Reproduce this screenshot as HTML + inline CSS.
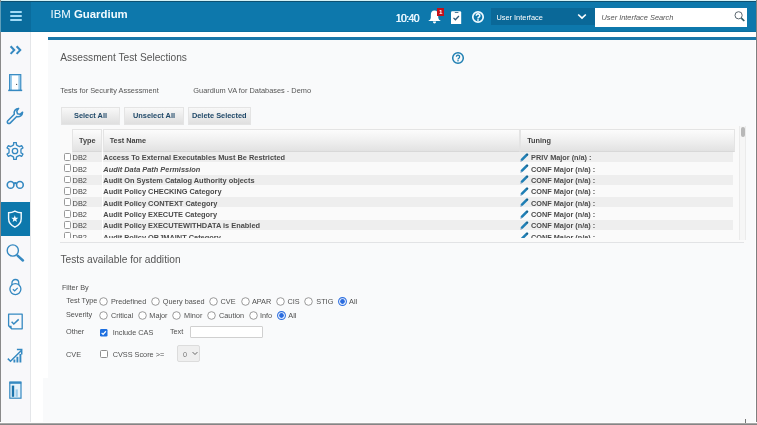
<!DOCTYPE html>
<html><head><meta charset="utf-8">
<style>
*{margin:0;padding:0;box-sizing:border-box;}
html,body{width:757px;height:425px;overflow:hidden;background:#fff;font-family:"Liberation Sans",sans-serif;}
.a{position:absolute;white-space:nowrap;}
.btn{height:17.5px;background:linear-gradient(#f8f8f8,#dfdfdf);border:1px solid #e4e4e4;}
.cb{width:7.3px;height:7.8px;border:1px solid #999;border-radius:1.5px;background:#fff;}
</style></head><body>
<div style="position:absolute;left:0;top:0;width:757px;height:425px;will-change:transform;background:#fff">
<div class="a" style="left:0px;top:0px;width:757px;height:32px;background:#0d78ac"></div>
<div class="a" style="left:0px;top:0px;width:31px;height:32px;background:#0a6c9d"></div>
<div class="a" style="left:31px;top:31px;width:726px;height:1px;background:#0b6e9f"></div>
<div class="a" style="left:10px;top:11px;width:12px;height:2px;background:#a3dbf6;border-radius:1px"></div>
<div class="a" style="left:10px;top:15px;width:12px;height:2px;background:#a3dbf6;border-radius:1px"></div>
<div class="a" style="left:10px;top:19px;width:12px;height:2px;background:#a3dbf6;border-radius:1px"></div>
<div class="a" style="left:50.5px;top:9.35px;font-size:11.4px;line-height:11.4px;color:#f2fbff">IBM <b>Guardium</b></div>
<div class="a" style="left:395.6px;top:13.01px;font-size:10.5px;line-height:10.5px;color:#eaf7ff;letter-spacing:-0.62px;text-shadow:0.35px 0 0 #eaf7ff">10:40</div>
<svg class="a" style="left:427px;top:9px" width="16" height="16" viewBox="0 0 16 16">
<path d="M7.5 1.6C4.9 1.6 3.9 3.4 3.9 5.6L3.8 9.0Q3.6 10.8 1.2 12.1H13.9Q11.5 10.8 11.3 9.0L11.1 5.6C11.1 3.4 10.1 1.6 7.5 1.6z" fill="#fff"/>
<path d="M5.9 12.6a1.6 1.9 0 0 0 3.2 0z" fill="#fff"/></svg>
<div class="a" style="left:437px;top:8px;width:6.7px;height:7.5px;background:#c3121c"></div>
<div class="a" style="left:438.9px;top:8.95px;font-size:6.2px;line-height:6.2px;color:#fff;font-weight:bold">1</div>
<svg class="a" style="left:450px;top:10px" width="13" height="15" viewBox="0 0 13 15">
<path d="M2.2 1.3H10Q11.2 1.3 11.2 2.5V14H1V2.5Q1 1.3 2.2 1.3z" fill="#fff"/>
<path d="M4.8 2.5h3.6" stroke="#3b6d8c" stroke-width="0.9"/>
<path d="M3.5 7.9l1.9 1.9 3.5-3.8" fill="none" stroke="#2b5878" stroke-width="1.3"/></svg>
<svg class="a" style="left:471px;top:10.3px" width="14" height="14" viewBox="0 0 14 14">
<circle cx="7" cy="7" r="5.2" fill="none" stroke="#eefaff" stroke-width="1.7"/>
<path d="M5.3 5.7a1.75 1.75 0 1 1 2.5 1.5c-0.6 0.3-0.8 0.6-0.8 1.3" fill="none" stroke="#eefaff" stroke-width="1.6"/>
<circle cx="7" cy="9.9" r="0.95" fill="#eefaff"/></svg>
<div class="a" style="left:491px;top:8px;width:104px;height:17px;background:#0a6898"></div>
<div class="a" style="left:496.4px;top:13.54px;font-size:7.4px;line-height:7.4px;color:#fff">User Interface</div>
<svg class="a" style="left:577px;top:13px" width="10" height="7" viewBox="0 0 10 7">
<path d="M1.2 1.5l3.8 3.6 3.8-3.6" fill="none" stroke="#fff" stroke-width="1.7"/></svg>
<div class="a" style="left:595px;top:8px;width:152px;height:18.5px;background:#fff"></div>
<div class="a" style="left:601.5px;top:13.54px;font-size:7.4px;line-height:7.4px;color:#555;font-style:italic">User Interface Search</div>
<svg class="a" style="left:733px;top:9.5px" width="14" height="14" viewBox="0 0 14 14">
<circle cx="5.6" cy="5.3" r="3.6" fill="none" stroke="#5b6770" stroke-width="1"/>
<path d="M8.3 8.1l3 2.9" stroke="#2f5a64" stroke-width="1.7"/></svg>
<div class="a" style="left:0px;top:32px;width:30px;height:393px;background:#f8f8fa"></div>
<div class="a" style="left:30px;top:32px;width:1px;height:393px;background:#e4e6e9"></div>
<div class="a" style="left:31px;top:32px;width:726px;height:393px;background:#fff"></div>
<div class="a" style="left:48px;top:40px;width:707px;height:385px;background:#f9fafb"></div>
<div class="a" style="left:43px;top:378px;width:5px;height:47px;background:#f9fafb"></div>
<div class="a" style="left:48px;top:37px;width:708px;height:3px;background:#1a77a9"></div>
<div class="a" style="left:1px;top:202px;width:29px;height:34px;background:#0d78ac"></div>
<svg class="a" style="left:9px;top:45px" width="14" height="10" viewBox="0 0 14 10">
<path d="M1.6 1.3l3.6 3.8-3.6 3.8M7.6 1.3l3.6 3.8-3.6 3.8" fill="none" stroke="#3589c1" stroke-width="2.1"/></svg>
<svg class="a" style="left:8px;top:73px" width="15" height="19" viewBox="0 0 15 19">
<rect x="1.6" y="1.6" width="11.2" height="15.8" fill="#9bcbea" stroke="#3589c1" stroke-width="1.1"/>
<rect x="4" y="2.6" width="6.3" height="14.3" fill="#fff"/>
<path d="M0.2 17.4h14" stroke="#3589c1" stroke-width="1.5"/>
<circle cx="8.6" cy="11.4" r="0.65" fill="#555"/></svg>
<svg class="a" style="left:6px;top:107px" width="19" height="19" viewBox="0 0 19 19">
<path d="M12.6 1.4a4.6 4.6 0 0 0-4.3 5.9L1.8 13.8a1.6 1.6 0 0 0 2.3 2.3l6.6-6.6a4.6 4.6 0 0 0 5.9-4.3l-2.6 2.1-2.6-0.6-0.6-2.6z" fill="none" stroke="#3589c1" stroke-width="1.55" stroke-linejoin="round"/></svg>
<svg class="a" style="left:6px;top:142px" width="18" height="18" viewBox="0 0 18 18">
<path d="M6.05 3.89 L7.58 2.86 L7.67 0.60 L10.33 0.60 L10.42 2.86 L11.95 3.89 L13.61 4.70 L15.61 3.65 L16.94 5.95 L15.02 7.16 L14.90 9.00 L15.02 10.84 L16.94 12.05 L15.61 14.35 L13.61 13.30 L11.95 14.11 L10.42 15.14 L10.33 17.40 L7.67 17.40 L7.58 15.14 L6.05 14.11 L4.39 13.30 L2.39 14.35 L1.06 12.05 L2.98 10.84 L3.10 9.00 L2.98 7.16 L1.06 5.95 L2.39 3.65 L4.39 4.70Z" fill="none" stroke="#3589c1" stroke-width="1.3" stroke-linejoin="round"/>
<circle cx="9" cy="9" r="2.7" fill="none" stroke="#3589c1" stroke-width="1.3"/></svg>
<svg class="a" style="left:6px;top:180px" width="19" height="10" viewBox="0 0 19 10">
<circle cx="4.6" cy="4.9" r="3.35" fill="none" stroke="#3589c1" stroke-width="1.6"/>
<circle cx="13.9" cy="4.9" r="3.35" fill="none" stroke="#3589c1" stroke-width="1.6"/>
<path d="M7.6 3.6Q9.25 2.6 10.9 3.6" fill="none" stroke="#3589c1" stroke-width="2.0"/></svg>
<svg class="a" style="left:7px;top:210px" width="17" height="19" viewBox="0 0 17 19">
<path d="M7.9 1.1Q10.9 2.8 14.2 2.8V8.8Q14.2 14.2 7.9 17.2Q1.6 14.2 1.6 8.8V2.8Q4.9 2.8 7.9 1.1z" fill="none" stroke="#f4fbff" stroke-width="1.4"/>
<path d="M7.80 5.30 L8.71 7.75 L11.32 7.86 L9.27 9.48 L9.97 11.99 L7.80 10.55 L5.63 11.99 L6.33 9.48 L4.28 7.86 L6.89 7.75Z" fill="#f4fbff"/></svg>
<svg class="a" style="left:6px;top:244px" width="19" height="19" viewBox="0 0 19 19">
<circle cx="6.8" cy="6.5" r="5.6" fill="none" stroke="#3589c1" stroke-width="1.4"/>
<path d="M11.6 11.6l5.3 4.9" stroke="#3589c1" stroke-width="2.5" stroke-linecap="round"/></svg>
<svg class="a" style="left:9px;top:278px" width="14" height="18" viewBox="0 0 14 18">
<path d="M2.95 7V4.9a3.4 3.4 0 0 1 6.8 0V7" fill="none" stroke="#3589c1" stroke-width="1.3"/>
<circle cx="6.4" cy="11.1" r="5.5" fill="#f8f8fa" stroke="#3589c1" stroke-width="1.3"/>
<path d="M3.9 11.2l1.8 1.7 3-3" fill="none" stroke="#3589c1" stroke-width="1.3"/></svg>
<svg class="a" style="left:7px;top:313px" width="17" height="17" viewBox="0 0 17 17">
<path d="M1.6 1.2h13.6v14.6H4.6L1.6 12.8z" fill="none" stroke="#3589c1" stroke-width="1.3" stroke-linejoin="round"/>
<path d="M1.6 12.8h3v3z" fill="#3589c1"/>
<path d="M4.6 8.8l2.2 2.2 4.9-4.6" fill="none" stroke="#3589c1" stroke-width="1.5"/></svg>
<svg class="a" style="left:7px;top:347px" width="17" height="17" viewBox="0 0 17 17">
<path d="M0.8 11.6l2.7 2.7 10.6-10.6M9.9 2.6h4.8v4.8" fill="none" stroke="#3589c1" stroke-width="1.5"/>
<path d="M7.4 15.6v-3M10.4 15.6v-5.8M13.4 15.6v-8.6" stroke="#3589c1" stroke-width="1.9"/></svg>
<svg class="a" style="left:9px;top:381px" width="13" height="18" viewBox="0 0 13 18">
<rect x="0.8" y="1.2" width="11.2" height="16" fill="#e6f2fa" stroke="#3589c1" stroke-width="1.2"/>
<rect x="0.6" y="0.6" width="11.6" height="2.2" fill="#3589c1"/>
<rect x="2.8" y="4.6" width="2.4" height="11.2" fill="#1a73ab"/>
<rect x="6.6" y="8.4" width="2.2" height="7.4" fill="#9ccbea"/></svg>
<div class="a" style="left:60.3px;top:52.87px;font-size:10.2px;line-height:10.2px;color:#555">Assessment Test Selections</div>
<svg class="a" style="left:451.2px;top:50.5px" width="14" height="14" viewBox="0 0 14 14">
<circle cx="7" cy="7" r="5.3" fill="none" stroke="#1f7fb2" stroke-width="1.5"/>
<path d="M5.4 5.8a1.6 1.6 0 1 1 2.4 1.4c-0.5 0.3-0.8 0.6-0.8 1.2" fill="none" stroke="#1f7fb2" stroke-width="1.3"/>
<circle cx="7" cy="9.8" r="0.8" fill="#1f7fb2"/></svg>
<div class="a" style="left:60.2px;top:87.14px;font-size:7.4px;line-height:7.4px;color:#555">Tests for Security Assessment</div>
<div class="a" style="left:193.3px;top:87.14px;font-size:7.4px;line-height:7.4px;color:#555">Guardium VA for Databases - Demo</div>
<div class="a btn" style="left:61px;top:107px;width:59px"></div>
<div class="a" style="left:61px;top:112.14px;width:59px;text-align:center;font-size:7.4px;line-height:7.4px;font-weight:bold;color:#1f4868">Select All</div>
<div class="a btn" style="left:124px;top:107px;width:60px"></div>
<div class="a" style="left:124px;top:112.14px;width:60px;text-align:center;font-size:7.4px;line-height:7.4px;font-weight:bold;color:#1f4868">Unselect All</div>
<div class="a btn" style="left:187.5px;top:107px;width:63.5px"></div>
<div class="a" style="left:187.5px;top:112.14px;width:63.5px;text-align:center;font-size:7.4px;line-height:7.4px;font-weight:bold;color:#1f4868">Delete Selected</div>
<div class="a" style="left:60px;top:126px;width:686px;height:117px;background:#fafafa"></div>
<div class="a" style="left:60px;top:242px;width:684px;height:1px;background:#e2e3e5"></div>
<div class="a" style="left:72px;top:129px;width:30px;height:22.5px;background:linear-gradient(#fcfcfc,#f1f1f1 45%,#e2e2e2);border:1px solid #e4e4e4;border-bottom-color:#d8d8d8"></div>
<div class="a" style="left:102.5px;top:129px;width:417px;height:22.5px;background:linear-gradient(#fcfcfc,#f1f1f1 45%,#e2e2e2);border:1px solid #e4e4e4;border-bottom-color:#d8d8d8"></div>
<div class="a" style="left:520px;top:129px;width:214.5px;height:22.5px;background:linear-gradient(#fcfcfc,#f1f1f1 45%,#e2e2e2);border:1px solid #e4e4e4;border-bottom-color:#d8d8d8"></div>
<div class="a" style="left:79px;top:137.22px;font-size:7.3px;line-height:7.3px;color:#444;font-weight:bold">Type</div>
<div class="a" style="left:109.7px;top:137.22px;font-size:7.3px;line-height:7.3px;color:#444;font-weight:bold">Test Name</div>
<div class="a" style="left:527.2px;top:136.62px;font-size:7.3px;line-height:7.3px;color:#444;font-weight:bold">Tuning</div>
<div class="a" style="left:0;top:0;width:757px;height:237.5px;overflow:hidden"><div class="a" style="left:72px;top:151.90px;width:661px;height:10.0px;background:#eeeeee"></div><div class="a" style="left:101.5px;top:151.90px;width:1px;height:11.37px;background:#fff"></div><div class="a cb" style="left:64px;top:152.90px"></div><div class="a" style="left:72.6px;top:154.14px;font-size:7.4px;line-height:7.4px;color:#444">DB2</div><div class="a" style="left:103.3px;top:154.14px;font-size:7.4px;line-height:7.4px;color:#4a4a4a;font-weight:bold;">Access To External Executables Must Be Restricted</div><svg class="a" style="left:520px;top:152.70px" width="9" height="9" viewBox="0 0 9 9"><path d="M2 6.6L7 1.6" stroke="#1f7fb5" stroke-width="2.6" stroke-linecap="round"/><path d="M0.3 8.7l0.5-1.8 1.3 1.3z" fill="#6f8fb5"/><path d="M6.6 1.2l1 1" stroke="#1c5a7e" stroke-width="1.6"/></svg><div class="a" style="left:531.1px;top:154.22px;font-size:7.3px;line-height:7.3px;color:#4a4a4a;font-weight:bold">PRIV Major (n/a) :</div><div class="a" style="left:72px;top:163.27px;width:661px;height:10.0px;background:#fafafa"></div><div class="a" style="left:101.5px;top:163.27px;width:1px;height:11.37px;background:#fff"></div><div class="a cb" style="left:64px;top:164.27px"></div><div class="a" style="left:72.6px;top:165.51px;font-size:7.4px;line-height:7.4px;color:#444">DB2</div><div class="a" style="left:103.3px;top:165.51px;font-size:7.4px;line-height:7.4px;color:#4a4a4a;font-weight:bold;font-style:italic">Audit Data Path Permission</div><svg class="a" style="left:520px;top:164.07px" width="9" height="9" viewBox="0 0 9 9"><path d="M2 6.6L7 1.6" stroke="#1f7fb5" stroke-width="2.6" stroke-linecap="round"/><path d="M0.3 8.7l0.5-1.8 1.3 1.3z" fill="#6f8fb5"/><path d="M6.6 1.2l1 1" stroke="#1c5a7e" stroke-width="1.6"/></svg><div class="a" style="left:531.1px;top:165.59px;font-size:7.3px;line-height:7.3px;color:#4a4a4a;font-weight:bold">CONF Major (n/a) :</div><div class="a" style="left:72px;top:174.64px;width:661px;height:10.0px;background:#eeeeee"></div><div class="a" style="left:101.5px;top:174.64px;width:1px;height:11.37px;background:#fff"></div><div class="a cb" style="left:64px;top:175.64px"></div><div class="a" style="left:72.6px;top:176.88px;font-size:7.4px;line-height:7.4px;color:#444">DB2</div><div class="a" style="left:103.3px;top:176.88px;font-size:7.4px;line-height:7.4px;color:#4a4a4a;font-weight:bold;">Audit On System Catalog Authority objects</div><svg class="a" style="left:520px;top:175.44px" width="9" height="9" viewBox="0 0 9 9"><path d="M2 6.6L7 1.6" stroke="#1f7fb5" stroke-width="2.6" stroke-linecap="round"/><path d="M0.3 8.7l0.5-1.8 1.3 1.3z" fill="#6f8fb5"/><path d="M6.6 1.2l1 1" stroke="#1c5a7e" stroke-width="1.6"/></svg><div class="a" style="left:531.1px;top:176.96px;font-size:7.3px;line-height:7.3px;color:#4a4a4a;font-weight:bold">CONF Major (n/a) :</div><div class="a" style="left:72px;top:186.01px;width:661px;height:10.0px;background:#fafafa"></div><div class="a" style="left:101.5px;top:186.01px;width:1px;height:11.37px;background:#fff"></div><div class="a cb" style="left:64px;top:187.01px"></div><div class="a" style="left:72.6px;top:188.25px;font-size:7.4px;line-height:7.4px;color:#444">DB2</div><div class="a" style="left:103.3px;top:188.25px;font-size:7.4px;line-height:7.4px;color:#4a4a4a;font-weight:bold;">Audit Policy CHECKING Category</div><svg class="a" style="left:520px;top:186.81px" width="9" height="9" viewBox="0 0 9 9"><path d="M2 6.6L7 1.6" stroke="#1f7fb5" stroke-width="2.6" stroke-linecap="round"/><path d="M0.3 8.7l0.5-1.8 1.3 1.3z" fill="#6f8fb5"/><path d="M6.6 1.2l1 1" stroke="#1c5a7e" stroke-width="1.6"/></svg><div class="a" style="left:531.1px;top:188.33px;font-size:7.3px;line-height:7.3px;color:#4a4a4a;font-weight:bold">CONF Major (n/a) :</div><div class="a" style="left:72px;top:197.38px;width:661px;height:10.0px;background:#eeeeee"></div><div class="a" style="left:101.5px;top:197.38px;width:1px;height:11.37px;background:#fff"></div><div class="a cb" style="left:64px;top:198.38px"></div><div class="a" style="left:72.6px;top:199.62px;font-size:7.4px;line-height:7.4px;color:#444">DB2</div><div class="a" style="left:103.3px;top:199.62px;font-size:7.4px;line-height:7.4px;color:#4a4a4a;font-weight:bold;">Audit Policy CONTEXT Category</div><svg class="a" style="left:520px;top:198.18px" width="9" height="9" viewBox="0 0 9 9"><path d="M2 6.6L7 1.6" stroke="#1f7fb5" stroke-width="2.6" stroke-linecap="round"/><path d="M0.3 8.7l0.5-1.8 1.3 1.3z" fill="#6f8fb5"/><path d="M6.6 1.2l1 1" stroke="#1c5a7e" stroke-width="1.6"/></svg><div class="a" style="left:531.1px;top:199.70px;font-size:7.3px;line-height:7.3px;color:#4a4a4a;font-weight:bold">CONF Major (n/a) :</div><div class="a" style="left:72px;top:208.75px;width:661px;height:10.0px;background:#fafafa"></div><div class="a" style="left:101.5px;top:208.75px;width:1px;height:11.37px;background:#fff"></div><div class="a cb" style="left:64px;top:209.75px"></div><div class="a" style="left:72.6px;top:210.99px;font-size:7.4px;line-height:7.4px;color:#444">DB2</div><div class="a" style="left:103.3px;top:210.99px;font-size:7.4px;line-height:7.4px;color:#4a4a4a;font-weight:bold;">Audit Policy EXECUTE Category</div><svg class="a" style="left:520px;top:209.55px" width="9" height="9" viewBox="0 0 9 9"><path d="M2 6.6L7 1.6" stroke="#1f7fb5" stroke-width="2.6" stroke-linecap="round"/><path d="M0.3 8.7l0.5-1.8 1.3 1.3z" fill="#6f8fb5"/><path d="M6.6 1.2l1 1" stroke="#1c5a7e" stroke-width="1.6"/></svg><div class="a" style="left:531.1px;top:211.07px;font-size:7.3px;line-height:7.3px;color:#4a4a4a;font-weight:bold">CONF Major (n/a) :</div><div class="a" style="left:72px;top:220.12px;width:661px;height:10.0px;background:#eeeeee"></div><div class="a" style="left:101.5px;top:220.12px;width:1px;height:11.37px;background:#fff"></div><div class="a cb" style="left:64px;top:221.12px"></div><div class="a" style="left:72.6px;top:222.36px;font-size:7.4px;line-height:7.4px;color:#444">DB2</div><div class="a" style="left:103.3px;top:222.36px;font-size:7.4px;line-height:7.4px;color:#4a4a4a;font-weight:bold;">Audit Policy EXECUTEWITHDATA is Enabled</div><svg class="a" style="left:520px;top:220.92px" width="9" height="9" viewBox="0 0 9 9"><path d="M2 6.6L7 1.6" stroke="#1f7fb5" stroke-width="2.6" stroke-linecap="round"/><path d="M0.3 8.7l0.5-1.8 1.3 1.3z" fill="#6f8fb5"/><path d="M6.6 1.2l1 1" stroke="#1c5a7e" stroke-width="1.6"/></svg><div class="a" style="left:531.1px;top:222.44px;font-size:7.3px;line-height:7.3px;color:#4a4a4a;font-weight:bold">CONF Major (n/a) :</div><div class="a" style="left:72px;top:231.49px;width:661px;height:10.0px;background:#fafafa"></div><div class="a" style="left:101.5px;top:231.49px;width:1px;height:11.37px;background:#fff"></div><div class="a cb" style="left:64px;top:232.49px"></div><div class="a" style="left:72.6px;top:233.73px;font-size:7.4px;line-height:7.4px;color:#444">DB2</div><div class="a" style="left:103.3px;top:233.73px;font-size:7.4px;line-height:7.4px;color:#4a4a4a;font-weight:bold;">Audit Policy OBJMAINT Category</div><svg class="a" style="left:520px;top:232.29px" width="9" height="9" viewBox="0 0 9 9"><path d="M2 6.6L7 1.6" stroke="#1f7fb5" stroke-width="2.6" stroke-linecap="round"/><path d="M0.3 8.7l0.5-1.8 1.3 1.3z" fill="#6f8fb5"/><path d="M6.6 1.2l1 1" stroke="#1c5a7e" stroke-width="1.6"/></svg><div class="a" style="left:531.1px;top:233.81px;font-size:7.3px;line-height:7.3px;color:#4a4a4a;font-weight:bold">CONF Major (n/a) :</div></div>
<div class="a" style="left:738.5px;top:126px;width:7.5px;height:114px;background:#f6f6f6;border-left:1px solid #ebebeb;border-right:1px solid #ebebeb"></div>
<div class="a" style="left:741px;top:127px;width:4px;height:10px;background:#b8b8b8;border-radius:2px"></div>
<div class="a" style="left:60.5px;top:254.97px;font-size:10.2px;line-height:10.2px;color:#555">Tests available for addition</div>
<div class="a" style="left:61.9px;top:284.12px;font-size:7.3px;line-height:7.3px;color:#505050">Filter By</div>
<div class="a" style="left:66.3px;top:297.12px;font-size:7.3px;line-height:7.3px;color:#505050">Test Type</div>
<div class="a" style="left:65.9px;top:311.02px;font-size:7.3px;line-height:7.3px;color:#505050">Severity</div>
<svg class="a" style="left:98.70px;top:296.90px" width="9" height="9" viewBox="0 0 9 9"><circle cx="4.5" cy="4.5" r="3.8" fill="#fff" stroke="#8f8f8f" stroke-width="0.9"/></svg>
<div class="a" style="left:110.9px;top:297.82px;font-size:7.3px;line-height:7.3px;color:#505050">Predefined</div>
<svg class="a" style="left:150.80px;top:296.90px" width="9" height="9" viewBox="0 0 9 9"><circle cx="4.5" cy="4.5" r="3.8" fill="#fff" stroke="#8f8f8f" stroke-width="0.9"/></svg>
<div class="a" style="left:162.8px;top:297.82px;font-size:7.3px;line-height:7.3px;color:#505050">Query based</div>
<svg class="a" style="left:209.20px;top:296.90px" width="9" height="9" viewBox="0 0 9 9"><circle cx="4.5" cy="4.5" r="3.8" fill="#fff" stroke="#8f8f8f" stroke-width="0.9"/></svg>
<div class="a" style="left:220.5px;top:297.82px;font-size:7.3px;line-height:7.3px;color:#505050">CVE</div>
<svg class="a" style="left:240.50px;top:296.90px" width="9" height="9" viewBox="0 0 9 9"><circle cx="4.5" cy="4.5" r="3.8" fill="#fff" stroke="#8f8f8f" stroke-width="0.9"/></svg>
<div class="a" style="left:251.9px;top:297.82px;font-size:7.3px;line-height:7.3px;color:#505050">APAR</div>
<svg class="a" style="left:276.10px;top:296.90px" width="9" height="9" viewBox="0 0 9 9"><circle cx="4.5" cy="4.5" r="3.8" fill="#fff" stroke="#8f8f8f" stroke-width="0.9"/></svg>
<div class="a" style="left:287.4px;top:297.82px;font-size:7.3px;line-height:7.3px;color:#505050">CIS</div>
<svg class="a" style="left:304.30px;top:296.90px" width="9" height="9" viewBox="0 0 9 9"><circle cx="4.5" cy="4.5" r="3.8" fill="#fff" stroke="#8f8f8f" stroke-width="0.9"/></svg>
<div class="a" style="left:316.3px;top:297.82px;font-size:7.3px;line-height:7.3px;color:#505050">STIG</div>
<svg class="a" style="left:337.60px;top:296.90px" width="9" height="9" viewBox="0 0 9 9"><circle cx="4.5" cy="4.5" r="3.9" fill="#fff" stroke="#2d6fe0" stroke-width="1.1"/><circle cx="4.5" cy="4.5" r="2.4" fill="#2a6ce0"/></svg>
<div class="a" style="left:349.1px;top:297.82px;font-size:7.3px;line-height:7.3px;color:#505050">All</div>
<svg class="a" style="left:98.70px;top:310.70px" width="9" height="9" viewBox="0 0 9 9"><circle cx="4.5" cy="4.5" r="3.8" fill="#fff" stroke="#8f8f8f" stroke-width="0.9"/></svg>
<div class="a" style="left:110.9px;top:311.72px;font-size:7.3px;line-height:7.3px;color:#505050">Critical</div>
<svg class="a" style="left:137.60px;top:310.70px" width="9" height="9" viewBox="0 0 9 9"><circle cx="4.5" cy="4.5" r="3.8" fill="#fff" stroke="#8f8f8f" stroke-width="0.9"/></svg>
<div class="a" style="left:149.3px;top:311.72px;font-size:7.3px;line-height:7.3px;color:#505050">Major</div>
<svg class="a" style="left:172.10px;top:310.70px" width="9" height="9" viewBox="0 0 9 9"><circle cx="4.5" cy="4.5" r="3.8" fill="#fff" stroke="#8f8f8f" stroke-width="0.9"/></svg>
<div class="a" style="left:184.1px;top:311.72px;font-size:7.3px;line-height:7.3px;color:#505050">Minor</div>
<svg class="a" style="left:206.90px;top:310.70px" width="9" height="9" viewBox="0 0 9 9"><circle cx="4.5" cy="4.5" r="3.8" fill="#fff" stroke="#8f8f8f" stroke-width="0.9"/></svg>
<div class="a" style="left:219px;top:311.72px;font-size:7.3px;line-height:7.3px;color:#505050">Caution</div>
<svg class="a" style="left:248.70px;top:310.70px" width="9" height="9" viewBox="0 0 9 9"><circle cx="4.5" cy="4.5" r="3.8" fill="#fff" stroke="#8f8f8f" stroke-width="0.9"/></svg>
<div class="a" style="left:260px;top:311.72px;font-size:7.3px;line-height:7.3px;color:#505050">Info</div>
<svg class="a" style="left:277.30px;top:310.70px" width="9" height="9" viewBox="0 0 9 9"><circle cx="4.5" cy="4.5" r="3.9" fill="#fff" stroke="#2d6fe0" stroke-width="1.1"/><circle cx="4.5" cy="4.5" r="2.4" fill="#2a6ce0"/></svg>
<div class="a" style="left:288.3px;top:311.72px;font-size:7.3px;line-height:7.3px;color:#505050">All</div>
<div class="a" style="left:66px;top:328.02px;font-size:7.3px;line-height:7.3px;color:#505050">Other</div>
<svg class="a" style="left:100px;top:329px" width="7.5" height="7.5" viewBox="0 0 8 8"><rect width="8" height="8" rx="1.3" fill="#1d6fe0"/><path d="M1.7 4.1l1.6 1.6 3-3.3" fill="none" stroke="#fff" stroke-width="1.3"/></svg>
<div class="a" style="left:112.7px;top:328.92px;font-size:7.3px;line-height:7.3px;color:#505050">Include CAS</div>
<div class="a" style="left:169.9px;top:328.32px;font-size:7.3px;line-height:7.3px;color:#505050">Text</div>
<div class="a" style="left:190.2px;top:325.5px;width:72.8px;height:12.8px;background:#fff;border:1px solid #d0d0d0;border-radius:1px"></div>
<div class="a" style="left:66px;top:350.62px;font-size:7.3px;line-height:7.3px;color:#505050">CVE</div>
<div class="a" style="left:100px;top:350.3px;width:7.6px;height:7.5px;background:#fff;border:1px solid #8f8f8f;border-radius:1.5px"></div>
<div class="a" style="left:112.7px;top:350.82px;font-size:7.3px;line-height:7.3px;color:#505050">CVSS Score &gt;=</div>
<div class="a" style="left:177px;top:345.3px;width:23.4px;height:16.3px;background:#efefef;border:1px solid #dcdcdc;border-radius:2px"></div>
<div class="a" style="left:183px;top:350.72px;font-size:7.3px;line-height:7.3px;color:#777">0</div>
<svg class="a" style="left:192px;top:351px" width="6" height="5" viewBox="0 0 6 5"><path d="M0.6 1.1l2.4 2.4 2.4-2.4" fill="none" stroke="#666" stroke-width="1"/></svg>
<div class="a" style="left:0px;top:0px;width:757px;height:1px;background:#d4f1f6"></div>
<div class="a" style="left:0px;top:1px;width:757px;height:1px;background:#0d5172"></div>
<div class="a" style="left:0px;top:0px;width:1px;height:425px;background:#8a8a8a"></div>
<div class="a" style="left:0px;top:2px;width:1px;height:30px;background:#5f9fbb"></div>
<div class="a" style="left:756px;top:0px;width:1px;height:425px;background:#7f7f7f"></div>
<div class="a" style="left:0px;top:422px;width:757px;height:1px;background:#fdfdfd"></div>
<div class="a" style="left:0px;top:423px;width:757px;height:1px;background:#a8a8a8"></div>
<div class="a" style="left:0px;top:424px;width:757px;height:1px;background:#858585"></div>
<div class="a" style="left:745px;top:419px;width:1px;height:4px;background:#777"></div>
</div></body></html>
